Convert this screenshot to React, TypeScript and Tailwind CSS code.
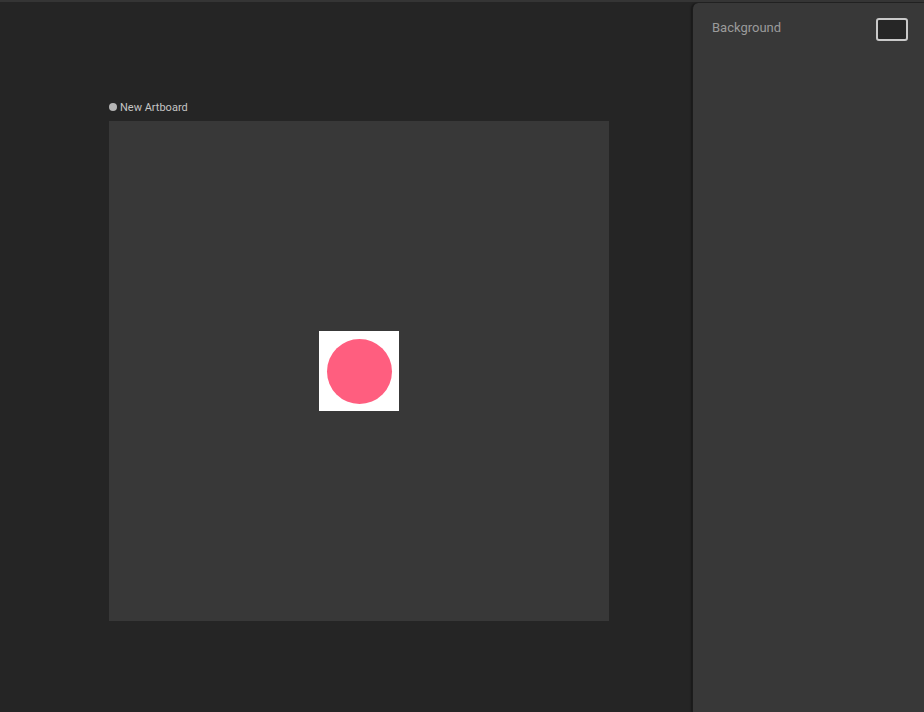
export default function App() {
  return (
    <div className="h-[712px] w-[924px] overflow-hidden bg-[#252525] border-t-2 border-[#353535] flex" style={{ fontFamily: 'Roboto, "Liberation Sans", sans-serif' }}>
      <div className="flex-1 pl-[109px] pt-[97px]">
        <div className="flex items-center gap-[3px] h-[16px] mb-[6px]">
          <span className="w-[8px] h-[8px] rounded-full bg-[#b4b4b4]" />
          <span className="text-[11px] text-[#c4c4c4] leading-none">New Artboard</span>
        </div>
        <div className="w-[500px] h-[500px] bg-[#383838] flex items-center justify-center">
          <div className="w-[80px] h-[80px] bg-white flex items-center justify-center">
            <div className="w-[65px] h-[65px] rounded-full bg-[#ff5e7f]" />
          </div>
        </div>
      </div>
      <div className="w-[232px] mt-[1px] bg-[#383838] rounded-tl-[6px] border-l border-[#1c1c1c] shadow-[-1px_0_2px_rgba(0,0,0,0.4)]">
        <div className="flex items-start justify-between pl-[19px] pr-[16px]">
          <span className="text-[13px] text-[#9b9b9b] mt-[15px]">Background</span>
          <div className="w-[32px] h-[23px] mt-[15px] rounded-[3px] border-2 border-[#c9c9c9] bg-[#262626]" />
        </div>
      </div>
    </div>
  );
}
